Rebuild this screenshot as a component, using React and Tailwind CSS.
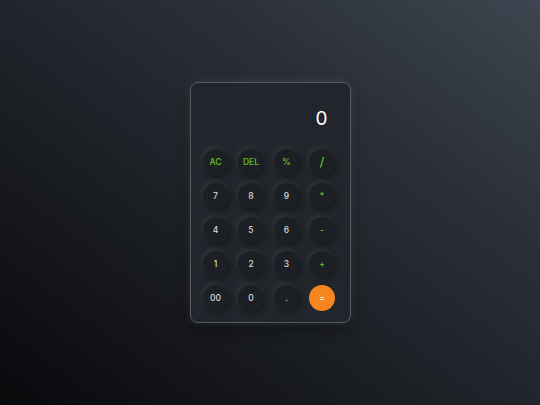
import React, { useState } from 'react';

const keys = [
  { label: 'AC', kind: 'op' },
  { label: 'DEL', kind: 'op' },
  { label: '%', kind: 'op' },
  { label: '/', kind: 'op', big: true },
  { label: '7' },
  { label: '8' },
  { label: '9' },
  { label: '*', kind: 'op' },
  { label: '4' },
  { label: '5' },
  { label: '6' },
  { label: '-', kind: 'op' },
  { label: '1' },
  { label: '2' },
  { label: '3' },
  { label: '+', kind: 'op' },
  { label: '00' },
  { label: '0' },
  { label: '.' },
  { label: '=', kind: 'eq' },
];

export default function App() {
  const [display] = useState('0');

  return (
    <div
      className="w-[540px] h-[405px] flex items-center justify-center bg-[linear-gradient(to_top_right,#08090b_0%,#1f2228_45%,#2b3038_70%,#3d4550_100%)]"
      style={{ fontFamily: 'Inter, "Noto Sans", sans-serif' }}
    >
      <div className="w-[161px] h-[241px] rounded-[8px] border border-[#575b61] bg-[#22262c] shadow-[0_0_8px_rgba(255,255,255,0.12),0_6px_14px_rgba(0,0,0,0.4)] flex flex-col">
        {/* Display */}
        <div className="h-[66px] flex items-center justify-end pr-[22px] pt-[4px]">
          <span className="text-[19px] text-white leading-none">{display}</span>
        </div>

        {/* Keypad */}
        <div className="grid grid-cols-[repeat(4,26px)] gap-x-[9.5px] gap-y-[8px] pl-[12px]">
          {keys.map((k) => (
            <button
              key={k.label}
              className={
                k.kind === 'eq'
                  ? 'w-[26px] h-[26px] rounded-full bg-[#f7851f] text-[#fde4c8] text-[8px] font-bold flex items-center justify-center'
                  : `w-[26px] h-[26px] rounded-full bg-[#1c1f24] shadow-[-2px_-3px_5px_rgba(255,255,255,0.06),2px_3px_5px_rgba(0,0,0,0.3)] flex items-center justify-center ${
                      k.kind === 'op' ? 'text-[#67c52a]' : 'text-[#dcdcdc]'
                    } ${k.big ? 'text-[12px]' : 'text-[8.5px]'} font-medium`
              }
            >
              {k.label}
            </button>
          ))}
        </div>
      </div>
    </div>
  );
}
